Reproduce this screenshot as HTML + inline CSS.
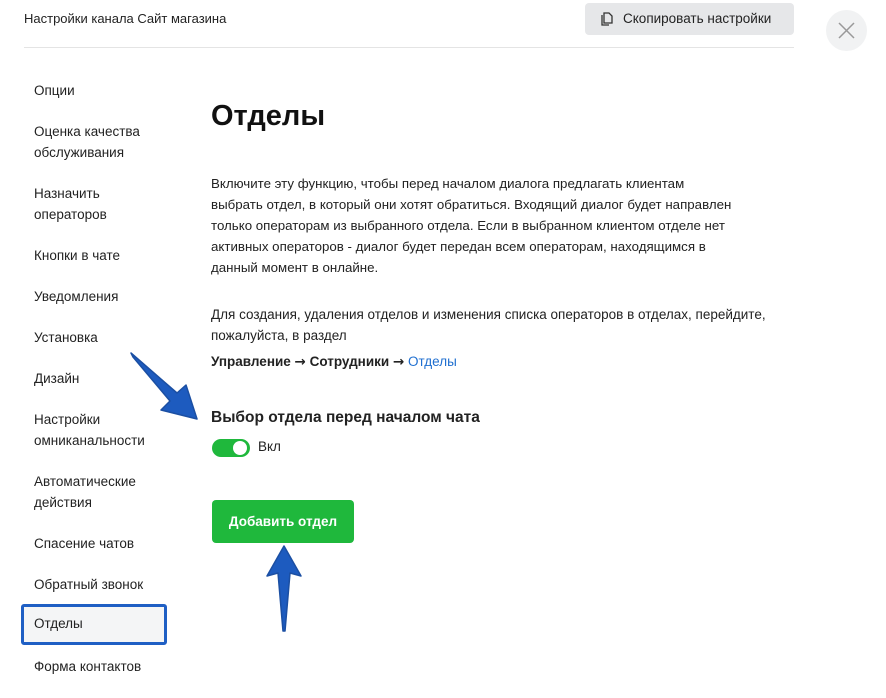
<!DOCTYPE html>
<html><head><meta charset="utf-8"><style>
body{margin:0;width:886px;height:698px;background:#fff;font-family:"Liberation Sans","DejaVu Sans",sans-serif;color:#222;position:relative;overflow:hidden}
.a{position:absolute}
.nav div{position:absolute;left:34px;font-size:13.5px;line-height:21px;color:#222}
p{margin:0}
</style></head><body>
<div class="a" style="left:24px;top:11px;font-size:13px">Настройки канала Сайт магазина</div>
<div class="a" style="left:585px;top:3px;width:209px;height:32px;background:#e6e7e9;border-radius:4px;font-size:13.5px;line-height:32px;text-align:left">
<svg class="a" style="left:16px;top:9px" width="12" height="14" viewBox="0 0 12 14"><path d="M3 1h5l3 3v7H3z M1 3v10h7" fill="none" stroke="#333" stroke-width="1.3"/></svg>
<span class="a" style="left:38px">Скопировать настройки</span></div>
<div class="a" style="left:826px;top:10px;width:41px;height:41px;border-radius:50%;background:#f1f2f3"></div>
<svg class="a" style="left:838px;top:22px" width="17" height="17"><path d="M1 1L16 16M16 1L1 16" stroke="#999" stroke-width="1.5"/></svg>
<div class="a" style="left:24px;top:47px;width:770px;height:1px;background:#e4e4e4"></div>
<div class="nav">
<div style="top:80px">Опции</div>
<div style="top:121px">Оценка качества<br>обслуживания</div>
<div style="top:183px">Назначить<br>операторов</div>
<div style="top:245px">Кнопки в чате</div>
<div style="top:286px">Уведомления</div>
<div style="top:327px">Установка</div>
<div style="top:368px">Дизайн</div>
<div style="top:409px">Настройки<br>омниканальности</div>
<div style="top:471px">Автоматические<br>действия</div>
<div style="top:533px">Спасение чатов</div>
<div style="top:574px">Обратный звонок</div>
<div style="top:656px">Форма контактов</div>
</div>
<div class="a" style="left:21px;top:604px;width:140px;height:35px;border:3px solid #1f5fc4;border-radius:3px;background:#f4f5f6"></div>
<div class="a" style="left:34px;top:616px;font-size:13.5px">Отделы</div>
<div class="a" style="left:211px;top:100px;font-size:29px;font-weight:bold;color:#111">Отделы</div>
<div class="a" style="left:211px;top:173px;white-space:nowrap;font-size:13.3px;line-height:21px">Включите эту функцию, чтобы перед началом диалога предлагать клиентам<br>выбрать отдел, в который они хотят обратиться. Входящий диалог будет направлен<br>только операторам из выбранного отдела. Если в выбранном клиентом отделе нет<br>активных операторов - диалог будет передан всем операторам, находящимся в<br>данный момент в онлайне.</div>
<div class="a" style="left:211px;top:304px;width:580px;font-size:13.5px;line-height:21px">Для создания, удаления отделов и изменения списка операторов в отделах, перейдите, пожалуйста, в раздел</div>
<div class="a" style="left:211px;top:351px;font-size:13.5px;line-height:21px;font-weight:bold">Управление <span style="font-family:'DejaVu Sans'">→</span> Сотрудники <span style="font-family:'DejaVu Sans'">→</span> <span style="color:#1f6fd0;font-weight:normal">Отделы</span></div>
<div class="a" style="left:211px;top:407px;font-size:15.5px;font-weight:bold;line-height:21px">Выбор отдела перед началом чата</div>
<div class="a" style="left:212px;top:439px;width:38px;height:18px;border-radius:9px;background:#1fb83c"></div>
<div class="a" style="left:233px;top:441px;width:14px;height:14px;border-radius:50%;background:#fff"></div>
<div class="a" style="left:258px;top:439px;font-size:13.5px">Вкл</div>
<div class="a" style="left:212px;top:500px;width:142px;height:43px;border-radius:4px;background:#1fb83c;color:#fff;font-weight:bold;font-size:13.5px;line-height:44px;text-align:center">Добавить отдел</div>
<svg class="a" style="left:0;top:0" width="886" height="698"><g fill="#1d5bbf" stroke="#1b4fa3" stroke-width="1.5" stroke-linejoin="round">
<polygon points="131,353 177,393 186,385 197,419 161,410 170,401 133,357"/>
<polygon points="284,546 301,576 290,573 285,631 283,631 278,573 267,576"/></g></svg>
</body></html>
